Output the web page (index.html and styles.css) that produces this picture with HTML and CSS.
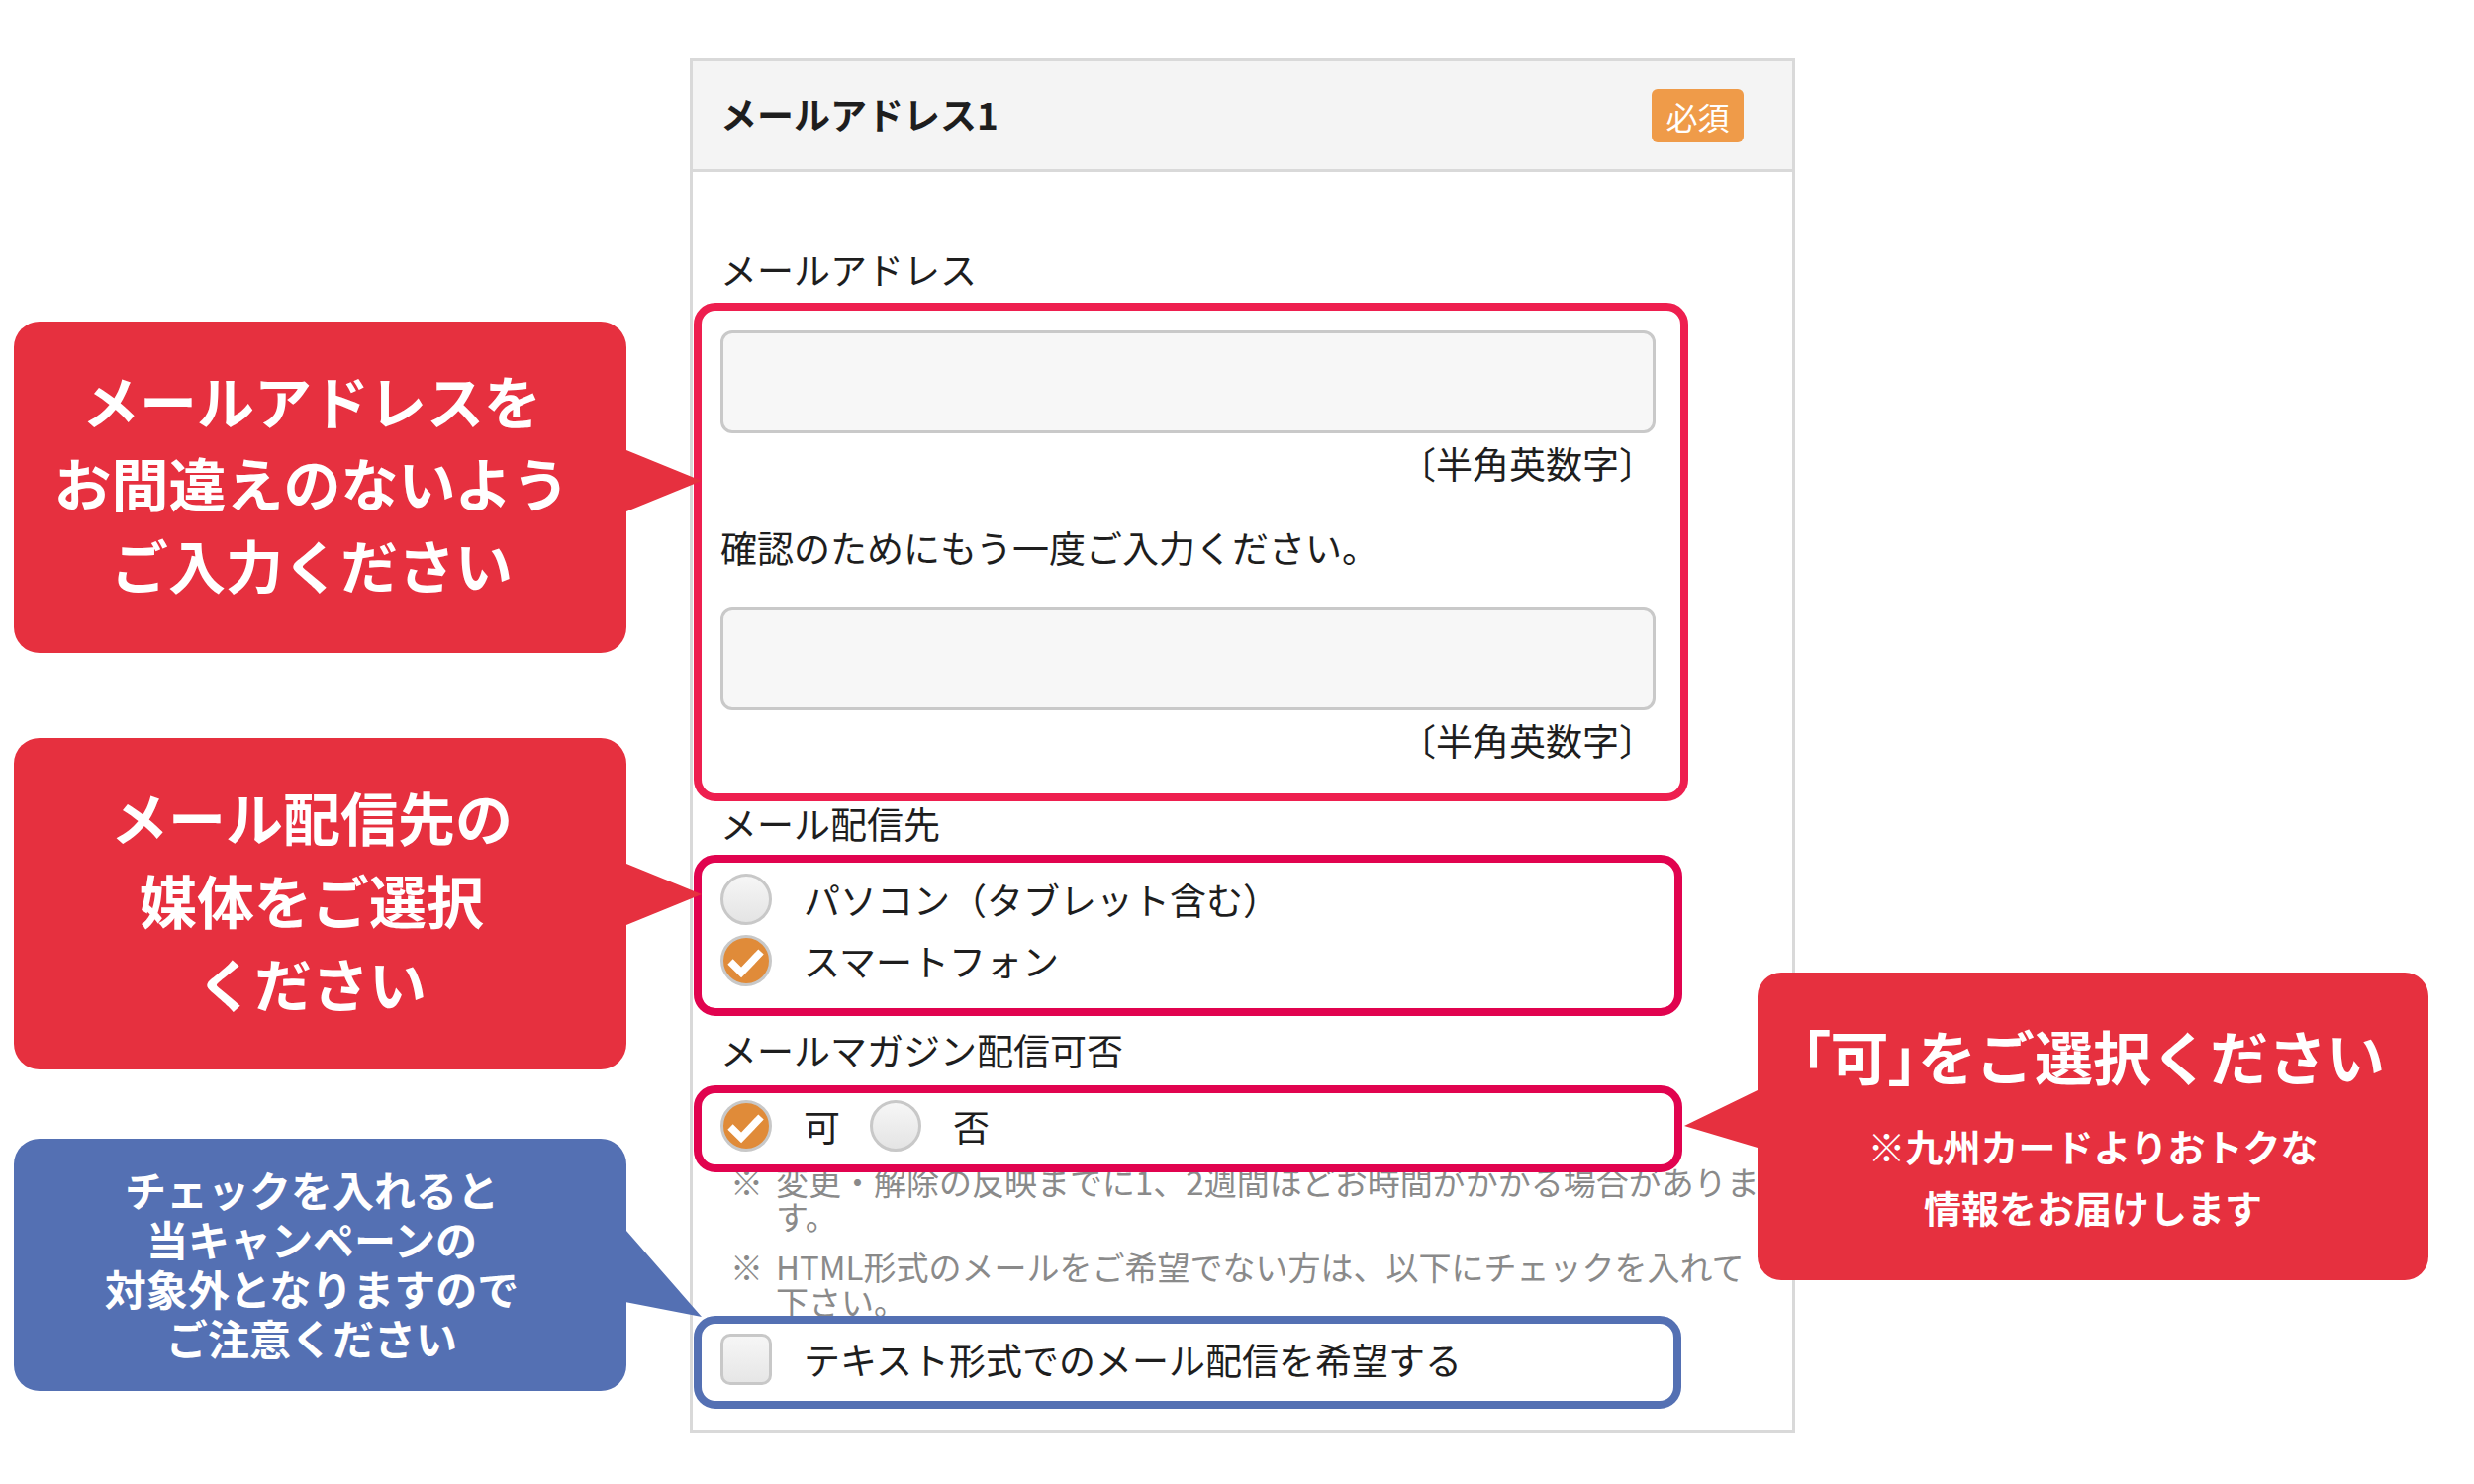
FILE: index.html
```html
<!DOCTYPE html>
<html lang="ja">
<head>
    <meta charset="UTF-8">
    <meta name="viewport" content="width=device-width, initial-scale=1.0">
    <title>メールアドレス入力のご案内</title>
    <link rel="stylesheet" href="styles.css">
</head>
<body>
    <div class="stage">
        <section class="panel">
            <div class="panel-head">
                <h2 class="panel-title">メールアドレス1</h2>
                <span class="badge">必須</span>
            </div>

            <div class="panel-body">
                <p class="field-label">メールアドレス</p>
                <input class="text-input" type="text">
                <p class="hint">〔半角英数字〕</p>

                <p class="field-label confirm-label">確認のためにもう一度ご入力ください。</p>
                <input class="text-input" type="text">
                <p class="hint">〔半角英数字〕</p>

                <p class="field-label group-label">メール配信先</p>
                <div class="choice-list">
                    <label class="choice">
                        <span class="radio"></span>
                        パソコン（タブレット含む）
                    </label>
                    <label class="choice">
                        <span class="radio is-checked">
                            <svg viewBox="0 0 52 52" width="52" height="52"><path d="M10 27 L21 38 L41 17" fill="none" stroke="#fff" stroke-width="7.5"/></svg>
                        </span>
                        スマートフォン
                    </label>
                </div>

                <p class="field-label group-label">メールマガジン配信可否</p>
                <div class="choice-inline">
                    <label class="choice">
                        <span class="radio is-checked">
                            <svg viewBox="0 0 52 52" width="52" height="52"><path d="M10 27 L21 38 L41 17" fill="none" stroke="#fff" stroke-width="7.5"/></svg>
                        </span>
                        可
                    </label>
                    <label class="choice">
                        <span class="radio"></span>
                        否
                    </label>
                </div>

                <div class="notes">
                    <p class="note"><span class="note-mark">※</span><span class="note-text">変更・解除の反映までに1、2週間ほどお時間がかかる場合があります。</span></p>
                    <p class="note"><span class="note-mark">※</span><span class="note-text">HTML形式のメールをご希望でない方は、以下にチェックを入れて下さい。</span></p>
                </div>

                <label class="choice checkbox-row">
                    <span class="checkbox"></span>
                    テキスト形式でのメール配信を希望する
                </label>
            </div>
        </section>

        <!-- annotation frames over the form -->
        <div class="mark mark-email"></div>
        <div class="mark mark-media"></div>
        <div class="mark mark-magazine"></div>
        <div class="mark mark-text"></div>

        <div class="callout callout-email">メールアドレスを<br>お間違えのないよう<br>ご入力ください</div>
        <div class="callout callout-media">メール配信先の<br>媒体をご選択<br>ください</div>
        <div class="callout callout-blue">チェックを入れると<br>当キャンペーンの<br>対象外となりますので<br>ご注意ください</div>
        <div class="callout callout-magazine">
            <p class="callout-title"><span class="palt">「</span>可<span class="palt">」</span>をご選択ください</p>
            <p class="callout-sub">※九州カードよりおトクな<br>情報をお届けします</p>
        </div>
    </div>
</body>
</html>
```

FILE: styles.css
```css
:root {
    --callout-red: #e6303f;
    --callout-blue: #5470b3;
    --mark-red: #e1034f;
    --panel-border: #d9d9d9;
    --text-color: #1e1e1e;
    --note-color: #8a8a8a;
    --check-orange: #e08b39;
}

* {
    margin: 0;
    padding: 0;
    box-sizing: border-box;
}

body {
    font-family: "Noto Sans CJK JP", sans-serif;
    color: var(--text-color);
    background: #fff;
}

.stage {
    position: relative;
    width: 2500px;
    height: 1500px;
    padding-top: 59px;
    overflow: hidden;
}

/* form panel */

.panel {
    width: 1117px;
    margin-left: 697px;
    border: 3px solid var(--panel-border);
}

.panel-head {
    height: 112px;
    display: flex;
    align-items: center;
    justify-content: space-between;
    padding: 0 49px 4px 28px;
    background: #f4f4f4;
    border-bottom: 3px solid var(--panel-border);
}

.panel-title {
    font-size: 37px;
    font-weight: 700;
    line-height: 50px;
}

.badge {
    width: 93px;
    height: 54px;
    margin-top: 4px;
    display: flex;
    align-items: center;
    justify-content: center;
    background: #ef9b49;
    color: #fff;
    font-size: 32px;
    font-weight: 400;
    border-radius: 6px;
}

.panel-body {
    padding: 73px 0 40px 28px;
}

.field-label {
    font-size: 37px;
    line-height: 50px;
}

.confirm-label {
    margin-top: 35px;
}

.group-label {
    margin-top: 34px;
}

.text-input {
    display: block;
    width: 945px;
    height: 104px;
    margin-top: 37px;
    background: #f7f7f7;
    border: 3px solid #c9c9c9;
    border-radius: 12px;
    outline: none;
}

.confirm-label + .text-input {
    margin-top: 36px;
}

.hint {
    width: 945px;
    margin-top: 5px;
    text-align: right;
    font-size: 37px;
    line-height: 50px;
}

.choice-list {
    margin-top: 21px;
}

.choice {
    display: flex;
    align-items: center;
    gap: 32px;
    height: 62px;
    font-size: 37px;
}

.choice-inline {
    display: flex;
    gap: 30px;
    margin-top: 21px;
}

.radio {
    width: 52px;
    height: 52px;
    flex: none;
    border-radius: 50%;
    border: 3px solid #c8c8c8;
    background: linear-gradient(#f6f6f6, #e4e4e4);
    display: flex;
    align-items: center;
    justify-content: center;
}

.radio.is-checked {
    background: var(--check-orange);
}

.radio svg {
    flex: none;
}

.checkbox {
    width: 52px;
    height: 52px;
    flex: none;
    border-radius: 10px;
    border: 3px solid #c8c8c8;
    background: linear-gradient(#f6f6f6, #e6e6e6);
}

.notes {
    margin-top: 8px;
}

.note {
    display: flex;
    margin-left: 10px;
    font-size: 33px;
    line-height: 35px;
    color: var(--note-color);
}

.note + .note {
    margin-top: 16px;
}

.note-mark {
    flex: none;
    width: 46px;
}

.note-text {
    width: 30.25em;
}

.checkbox-row {
    margin-top: 10px;
}

/* annotation frames */

.mark {
    position: absolute;
    border: 8px solid var(--mark-red);
    border-radius: 22px;
}

.mark-email {
    left: 701px;
    top: 306px;
    width: 1005px;
    height: 504px;
    border-color: #ee1f4f;
}

.mark-media {
    left: 701px;
    top: 864px;
    width: 999px;
    height: 163px;
}

.mark-magazine {
    left: 701px;
    top: 1097px;
    width: 999px;
    height: 88px;
}

.mark-text {
    left: 701px;
    top: 1330px;
    width: 998px;
    height: 94px;
    border-color: var(--callout-blue);
}

/* speech bubbles */

.callout {
    position: absolute;
    left: 14px;
    width: 619px;
    display: flex;
    align-items: center;
    justify-content: center;
    padding: 0 17px 10px 0;
    background: var(--callout-red);
    color: #fff;
    font-weight: 700;
    text-align: center;
    border-radius: 26px;
}

.callout::after {
    content: "";
    position: absolute;
    left: 100%;
    width: 76px;
    background: inherit;
    clip-path: polygon(0 0, 100% 50%, 0 100%);
}

.callout-email {
    top: 325px;
    height: 335px;
    font-size: 58px;
    line-height: 83px;
}

.callout-email::after {
    top: 130px;
    height: 62px;
}

.callout-media {
    top: 746px;
    height: 335px;
    font-size: 58px;
    line-height: 84px;
}

.callout-media::after {
    top: 127px;
    height: 62px;
}

.callout-blue {
    top: 1151px;
    height: 255px;
    padding-bottom: 4px;
    background: var(--callout-blue);
    font-size: 42px;
    line-height: 50px;
}

.callout-blue::after {
    top: 93px;
    height: 87px;
    clip-path: polygon(0 0, 100% 100%, 0 83%);
}

.callout-magazine {
    left: 1776px;
    top: 983px;
    width: 678px;
    height: 311px;
    display: block;
    padding: 44px 0 0;
    border-radius: 24px;
}

.callout-magazine::after {
    left: auto;
    right: 100%;
    top: 119px;
    width: 74px;
    height: 58px;
    clip-path: polygon(100% 0, 0 62%, 100% 100%);
}

.callout-title {
    font-size: 59px;
    line-height: 80px;
}

.palt {
    font-feature-settings: "palt";
}

.callout-sub {
    margin-top: 20px;
    font-size: 38px;
    line-height: 62px;
}
```
